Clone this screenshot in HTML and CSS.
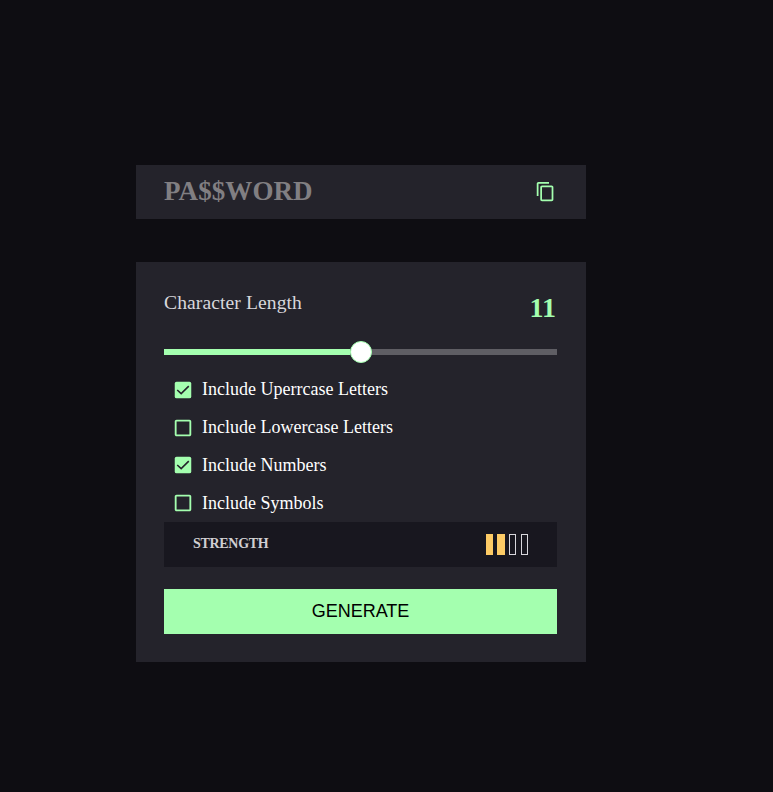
FILE: index.html
```html
<!DOCTYPE html>
<html lang="en">
<head>
<meta charset="utf-8">
<title>Password Generator</title>
<link rel="stylesheet" href="styles.css">
</head>
<body>
<main class="generator">
  <section class="password">
    <span class="password-text">PA$$WORD</span>
    <svg class="copy" viewBox="0 0 24 24"><path d="M16 1H4c-1.100 0-2 .9-2 2v14h2V3h12V1zm3 4H8c-1.100 0-2 .9-2 2v14c0 1.100.9 2 2 2h11c1.100 0 2-.9 2-2V7c0-1.100-.9-2-2-2zm0 16H8V7h11v14z"/></svg>
  </section>
  <section class="panel">
    <div class="length"><span class="length-label">Character Length</span><span class="length-value">11</span></div>
    <div class="slider"><div class="fill"></div><div class="thumb"></div></div>
    <ul class="options">
      <li><svg class="box" viewBox="0 0 24 24"><rect x="3" y="3" width="18" height="18" rx="2"/><path class="check" d="M5.700 12l4.300 4L18.300 7.800"/></svg><span>Include Uperrcase Letters</span></li>
      <li><svg class="box" viewBox="0 0 24 24"><path d="M19 5v14H5V5h14m0-2H5c-1.100 0-2 .9-2 2v14c0 1.100.9 2 2 2h14c1.100 0 2-.9 2-2V5c0-1.100-.9-2-2-2z"/></svg><span>Include Lowercase Letters</span></li>
      <li><svg class="box" viewBox="0 0 24 24"><rect x="3" y="3" width="18" height="18" rx="2"/><path class="check" d="M5.700 12l4.300 4L18.300 7.800"/></svg><span>Include Numbers</span></li>
      <li><svg class="box" viewBox="0 0 24 24"><path d="M19 5v14H5V5h14m0-2H5c-1.100 0-2 .9-2 2v14c0 1.100.9 2 2 2h14c1.100 0 2-.9 2-2V5c0-1.100-.9-2-2-2z"/></svg><span>Include Symbols</span></li>
    </ul>
    <div class="strength"><span class="strength-label">STRENGTH</span><div class="bars"><i class="on"></i><i class="on wide"></i><i></i><i class="last"></i></div></div>
    <button class="generate">GENERATE</button>
  </section>
</main>
</body>
</html>
```
FILE: styles.css
```css
* { box-sizing: border-box; }
body { margin: 0; height: 792px; background: #0e0d12; font-family: "Liberation Serif", "Times New Roman", serif; }
.generator { width: 450px; margin-left: 136px; padding-top: 165px; }
.password { height: 54px; padding: 0 30px 2px 28px; display: flex; align-items: center; justify-content: space-between; background: #24232b; }
.password-text { font-size: 27px; font-weight: bold; letter-spacing: .08px; color: #817f82; }
.copy { width: 21px; height: 21px; fill: #a4ffaf; }
.panel { height: 400px; margin-top: 43px; padding: 28px 29px 28px 28px; background: #24232b; }
.length { height: 52px; display: flex; justify-content: space-between; color: #d8d7dc; }
.length-label { font-size: 19.600px; line-height: 26px; letter-spacing: .09px; }
.length-value { font-size: 28px; line-height: 35px; font-weight: bold; color: #a4ffaf; margin-right: 1px; }
.slider { height: 20px; display: flex; align-items: center; background: linear-gradient(#5f5e64, #5f5e64) center / 100% 6px no-repeat; }
.fill { width: 186px; height: 6px; background: #a4ffaf; }
.thumb { width: 22px; height: 22px; border: 1px solid #a4ffaf; border-radius: 50%; background: #fff; flex: none; }
.options { list-style: none; margin: 9px 0 0; padding: 0; height: 151px; }
.options li { height: 37.800px; display: flex; align-items: center; gap: 8px; padding-left: 8px; color: #fff; font-size: 18px; }
.box { width: 22px; height: 22px; fill: #a4ffaf; }
.check { fill: none; stroke: #24232b; stroke-width: 1.700; }
.strength { height: 45px; padding: 0 29px; display: flex; align-items: center; justify-content: space-between; background: #18171f; color: #d0cfd2; font-size: 14px; font-weight: bold; }
.strength-label { padding-bottom: 2px; letter-spacing: -.3px; }
.bars { display: flex; gap: 4px; }
.bars i { width: 7px; height: 21px; border: 1px solid #d8d7dc; }
.bars .on { background: #fdcb65; border-color: #fdcb65; }
.bars .wide { width: 8px; }
.bars .last { margin-left: 1px; }
.generate { display: block; width: 100%; height: 45px; margin-top: 22px; border: 0; padding: 0; background: #a4ffaf; color: #000; font: 18px "Liberation Sans", Arial, sans-serif; }
```
